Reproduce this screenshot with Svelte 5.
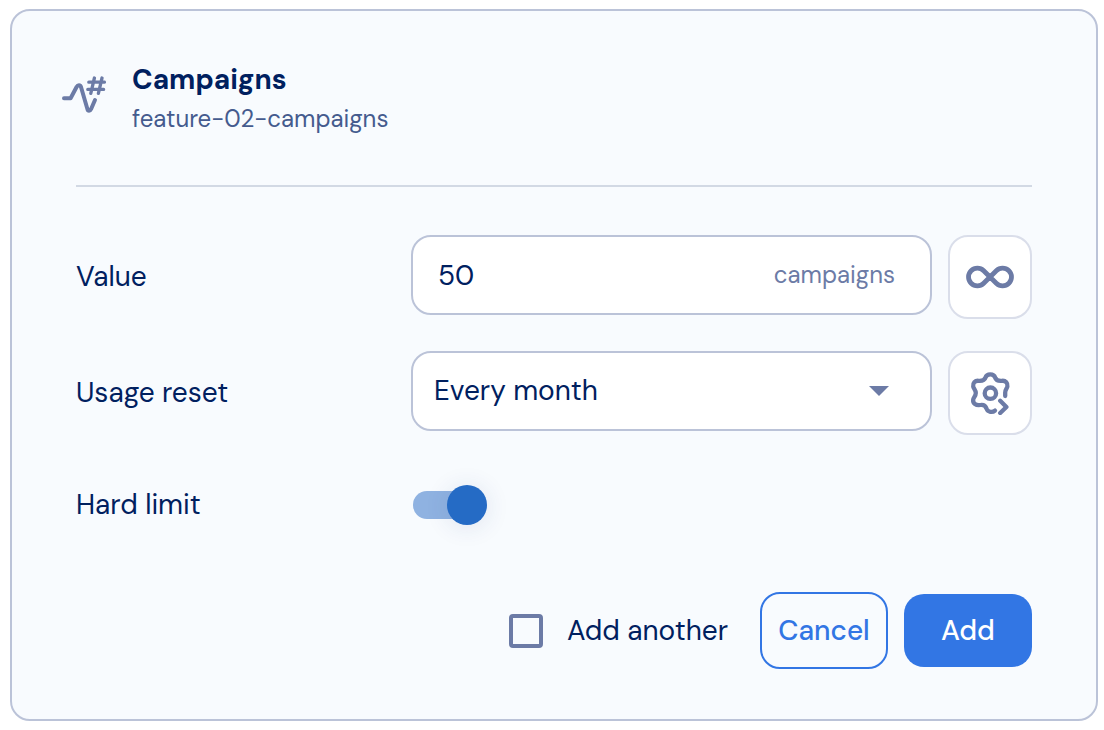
<script lang="ts">
  let value = $state("50");
  let reset = $state("month");
  let hardLimit = $state(true);
  let addAnother = $state(false);
</script>

<form class="card" onsubmit={(e) => e.preventDefault()}>
  <header>
    <svg class="feature-icon" viewBox="0 0 44 38" fill="none" aria-hidden="true">
      <path
        class="wave"
        d="M2 22.3H8.6L14.7 10.8C15.8 8.6 18.2 8.6 19 11L25.4 33C26 35.3 28 35.3 29 33.2L33 24"
      />
      <path class="hash" d="M32.4 2L28.8 17.4M40 2L36.4 17.4M26.8 6.2H42.4M25.8 13.4H41.6" />
    </svg>
    <div>
      <h1>Campaigns</h1>
      <p>feature-02-campaigns</p>
    </div>
  </header>

  <div class="body">
    <div class="row">
      <label for="value">Value</label>
      <div class="field">
        <input id="value" type="text" inputmode="numeric" bind:value />
        <span class="unit">campaigns</span>
      </div>
      <button type="button" class="square" aria-label="Unlimited">
        <svg width="48" height="24" viewBox="0 0 48 24" fill="none">
          <path
            d="M17.7 5.7A8.9 8.9 0 1 0 17.7 18.3L30.3 5.7A8.9 8.9 0 1 1 30.3 18.3Z"
          />
        </svg>
      </button>
    </div>

    <div class="row">
      <label for="reset">Usage reset</label>
      <div class="field select">
        <select id="reset" bind:value={reset}>
          <option value="day">Every day</option>
          <option value="month">Every month</option>
          <option value="year">Every year</option>
        </select>
        <svg class="caret" width="20" height="10" viewBox="0 0 20 10" aria-hidden="true">
          <path d="M0 0H20L10 10Z" />
        </svg>
      </div>
      <button type="button" class="square" aria-label="Reset settings">
        <svg class="gear" width="42" height="44" viewBox="0 0 42 44" fill="none">
          <path
            d="M26 39.6C23.4 41.8 19 41.3 17.6 37.8C16.6 35 14.6 33.5 11.4 34C7 34.7 3.6 32.4 4.2 28.5C4.5 26.5 6.8 25 6.8 22C6.8 19 4.5 17.5 4.2 15.5C3.6 12 6 9.5 9.5 9.8C13 10.1 15.5 9.5 16.5 6.5C17.8 2.4 24.8 2.4 26.1 6.5C27.1 9.5 29.6 10.1 33.1 9.8C36.6 9.5 39 12 38.4 15.5C38.1 17.5 36.2 18.6 36.2 21.6V25"
          />
          <circle cx="21.4" cy="22.2" r="5.7" />
          <path d="M31.2 29.8L37.4 36L31.2 42" />
        </svg>
      </button>
    </div>

    <div class="row toggle">
      <label for="hard-limit">Hard limit</label>
      <input id="hard-limit" class="switch" type="checkbox" role="switch" bind:checked={hardLimit} />
    </div>
  </div>

  <footer>
    <label class="another">
      <input type="checkbox" bind:checked={addAnother} />
      Add another
    </label>
    <button type="button" class="cancel">Cancel</button>
    <button type="submit" class="add">Add</button>
  </footer>
</form>

<style>
  :global(body) {
    margin: 0;
    background: #fff;
  }
  .card {
    --ink: #00205f;
    --muted: #6c7ba6;
    --line: #bbc3d8;
    --blue: #3276e4;
    box-sizing: border-box;
    margin: 9px 6px 9px 10px;
    padding: 48px 64px 50px;
    border: 2px solid var(--line);
    border-radius: 20px;
    background: #f8fbfe;
    color: var(--ink);
    font-family: "DM Sans", Inter, "Liberation Sans", sans-serif;
    font-size: 28px;
    line-height: 36px;
  }
  header {
    display: flex;
    align-items: flex-start;
    gap: 26px;
    margin-left: -14px;
    padding-bottom: 48px;
  }
  .feature-icon {
    width: 44px;
    height: 38px;
    margin-top: 17px;
    stroke: var(--muted);
    stroke-linecap: round;
    stroke-linejoin: round;
  }
  .wave {
    stroke-width: 4;
  }
  .hash {
    stroke-width: 3.3;
  }
  h1,
  p {
    margin: 0;
  }
  h1 {
    font-size: 28px;
    line-height: 42px;
    font-weight: 700;
  }
  p,
  .unit {
    font-size: 24px;
  }
  p {
    color: #455b8e;
  }
  .body {
    display: grid;
    gap: 32px;
    padding-top: 48px;
    border-top: 2px solid #d2d9e4;
  }
  .row {
    display: grid;
    grid-template-columns: 319px minmax(0, 1fr) 84px;
    column-gap: 16px;
    align-items: center;
  }
  .toggle {
    min-height: 76px;
  }
  .field {
    box-sizing: border-box;
    align-self: start;
    display: flex;
    align-items: center;
    height: 80px;
    border: 2px solid var(--line);
    border-radius: 20px;
    background: #fff;
  }
  .field input,
  .field select {
    flex: 1;
    min-width: 0;
    height: 100%;
    border: 0;
    border-radius: 18px;
    background: transparent;
    color: inherit;
    font: inherit;
    outline: none;
  }
  .field input {
    padding: 0 25px;
  }
  .unit {
    padding-right: 35px;
    color: var(--muted);
  }
  .select {
    display: grid;
  }
  .field select,
  .caret {
    grid-area: 1 / 1;
  }
  .field select {
    appearance: none;
    padding: 0 64px 0 21px;
  }
  .caret {
    justify-self: end;
    margin-right: 41px;
    fill: var(--muted);
    pointer-events: none;
  }
  .field:focus-within {
    border-color: var(--blue);
  }
  button {
    box-sizing: border-box;
    border-radius: 20px;
    font: inherit;
    cursor: pointer;
  }
  .square {
    display: grid;
    place-items: center;
    width: 84px;
    height: 84px;
    padding: 0;
    border: 2px solid #dadeea;
    background: #fff;
  }
  .square svg {
    stroke: var(--muted);
    stroke-width: 4.8;
    stroke-linecap: round;
    stroke-linejoin: round;
  }
  .square .gear {
    stroke-width: 4.3;
  }
  .switch {
    appearance: none;
    display: flex;
    align-items: center;
    width: 72px;
    height: 28px;
    margin: 0 0 0 2px;
    border-radius: 14px;
    background: #b9c3d6;
    cursor: pointer;
  }
  .switch::before {
    content: "";
    flex: none;
    width: 40px;
    height: 40px;
    border-radius: 50%;
    background: #fff;
    box-shadow: 0 2px 24px rgb(32 60 120 / 12%);
  }
  .switch:checked {
    background: #8fb2e1;
  }
  .switch:checked::before {
    margin-left: 34px;
    background: #256bc5;
  }
  footer {
    display: flex;
    flex-wrap: wrap;
    justify-content: flex-end;
    align-items: center;
    gap: 16px;
    margin-top: 49px;
  }
  .another {
    display: flex;
    align-items: center;
    gap: 24px;
    margin-right: 16px;
  }
  .another input {
    appearance: none;
    width: 34px;
    height: 34px;
    margin: 0;
    border: 4px solid var(--muted);
    border-radius: 4px;
  }
  .another input:checked {
    background: var(--muted);
  }
  .cancel,
  .add {
    min-width: 128px;
    padding: 0 8px;
    font-weight: 500;
  }
  .cancel {
    height: 77px;
    border: 2px solid var(--blue);
    background: transparent;
    color: var(--blue);
  }
  .add {
    height: 73px;
    border: 0;
    background: var(--blue);
    color: #fff;
  }
</style>
